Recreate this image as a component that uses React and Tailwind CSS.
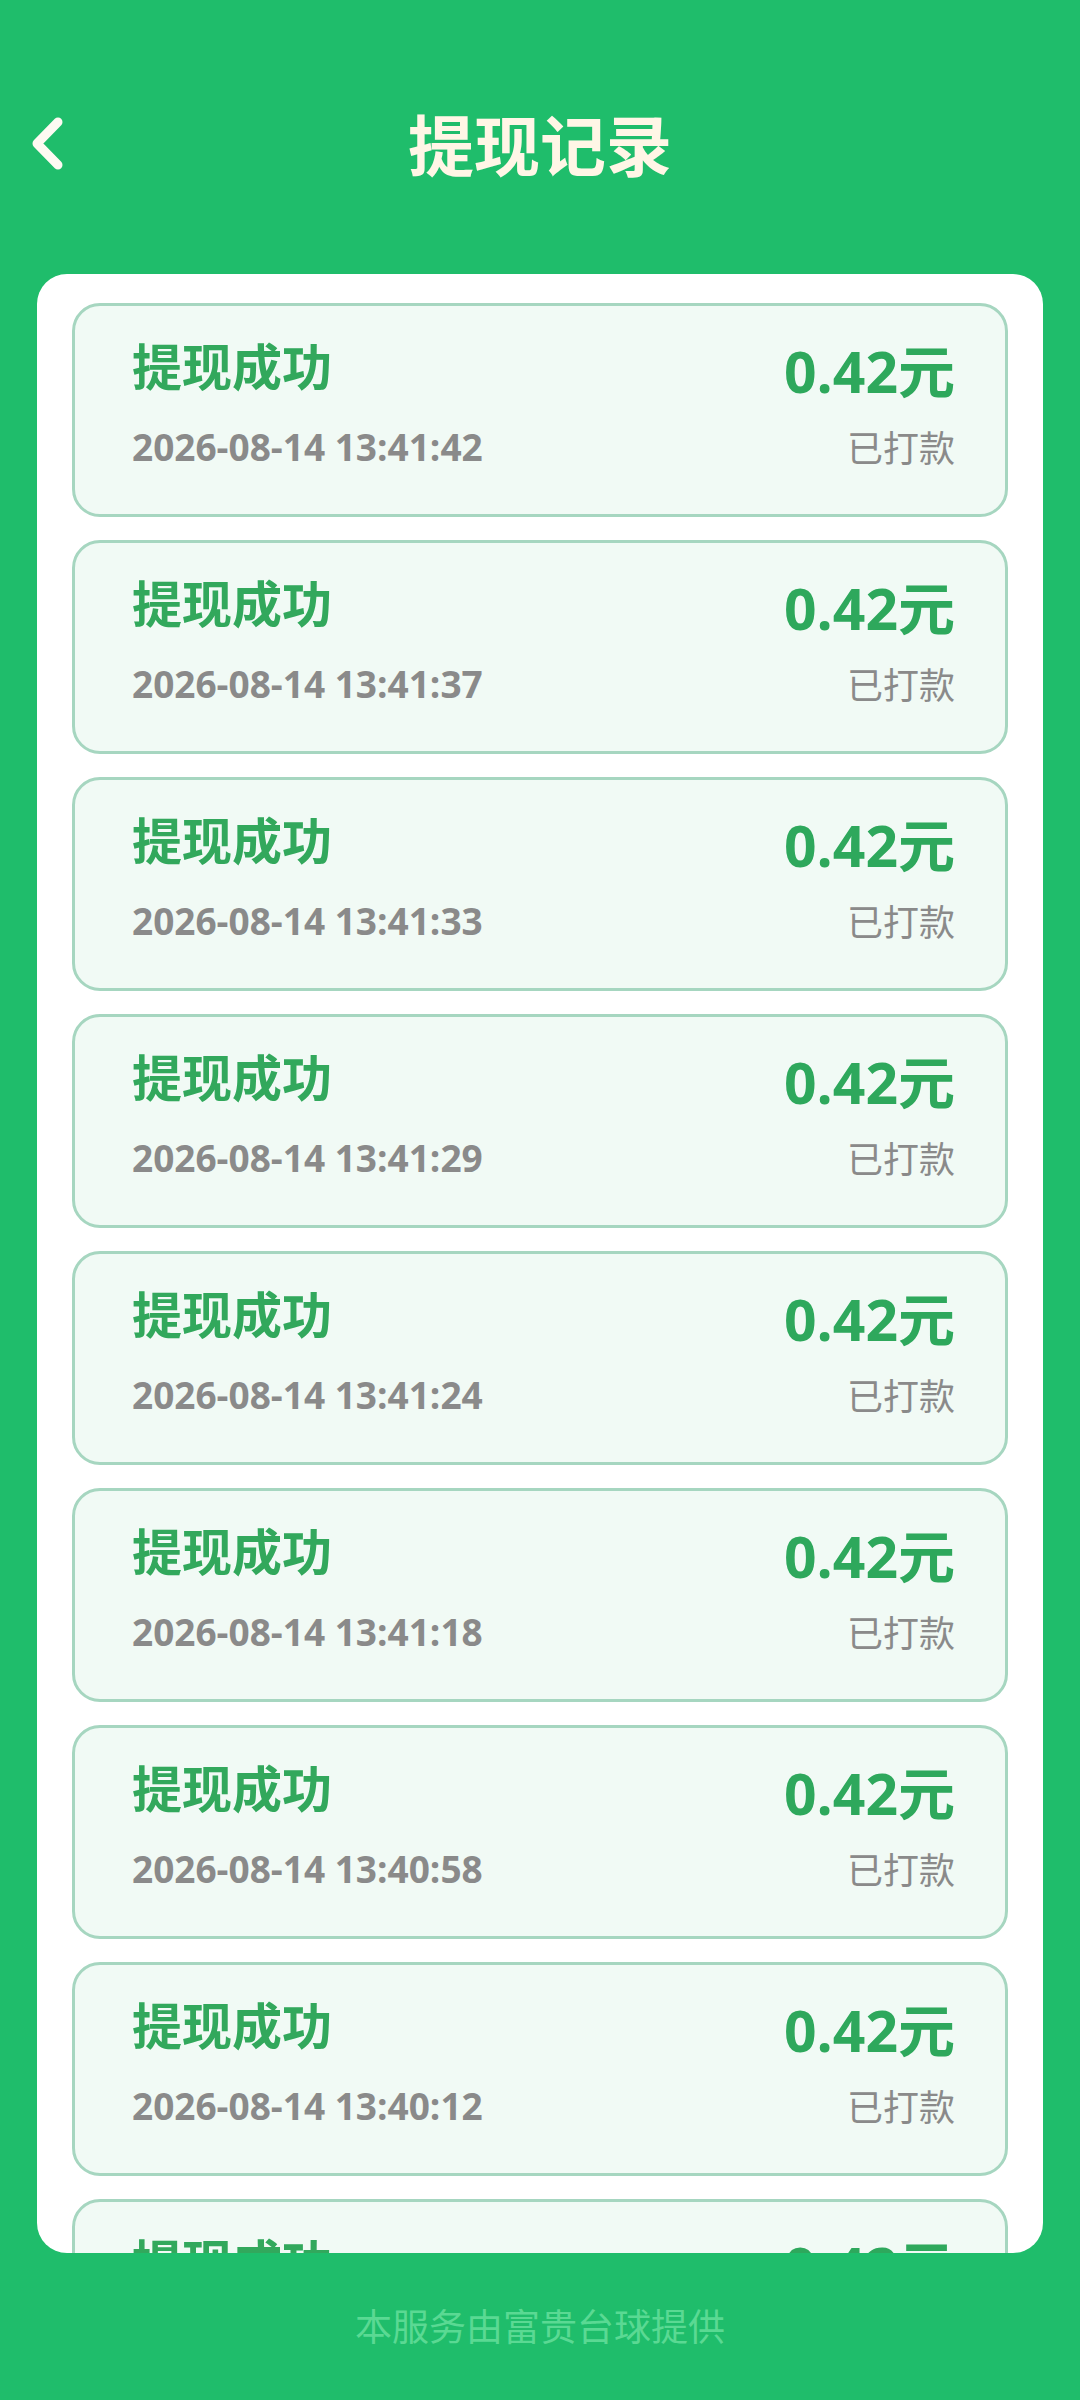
const records = [
  "2026-08-14 13:41:42",
  "2026-08-14 13:41:37",
  "2026-08-14 13:41:33",
  "2026-08-14 13:41:29",
  "2026-08-14 13:41:24",
  "2026-08-14 13:41:18",
  "2026-08-14 13:40:58",
  "2026-08-14 13:40:12",
  "2026-08-14 13:39:50",
];

const cjk = { fontFamily: '"Open Sans", "Noto Sans CJK SC", sans-serif' };

function BackIcon() {
  return (
    <svg width="70" height="70" viewBox="0 0 70 70" fill="none">
      <path d="M58 12 L37 33.5 L58 55" stroke="#fdfaf2" strokeWidth="9" strokeLinecap="round" strokeLinejoin="round" />
    </svg>
  );
}

function RecordCard({ time }) {
  return (
    <div className="flex h-[214px] shrink-0 justify-between rounded-[28px] border-[3px] border-[#a6d6c0] bg-[#f1faf5] pl-[57px] pr-[50px]">
      <div className="flex flex-col pt-[31px]">
        <div className="text-[50px] font-bold leading-[60px] text-[#32a85c]">提现成功</div>
        <div className="mt-[26px] text-[37px] font-bold leading-[48px] text-[#8a8a8a]">{time}</div>
      </div>
      <div className="flex flex-col items-end pt-[33px]">
        <div className="text-[57px] font-bold leading-[64px] text-[#2ea85c]">0.42元</div>
        <div className="mt-[24px] text-[36px] leading-[44px] text-[#8a8a8a]">已打款</div>
      </div>
    </div>
  );
}

export default function App() {
  return (
    <div className="flex h-[2400px] w-[1080px] flex-col bg-[#1fbd6b]" style={cjk}>
      <div className="grid h-[274px] shrink-0 grid-cols-[1fr_auto_1fr] items-start">
        <div className="mt-[110px]">
          <BackIcon />
        </div>
        <div className="mt-[105px] text-[66px] font-bold leading-[80px] text-[#fff6e6]">提现记录</div>
        <div />
      </div>
      <div className="mx-[37px] flex h-[1979px] shrink-0 flex-col gap-[23px] overflow-hidden rounded-[30px] bg-white px-[35px] pt-[29px]">
        {records.map((t) => (
          <RecordCard key={t} time={t} />
        ))}
      </div>
      <div className="flex flex-1 items-center justify-center">
        <span className="text-[37px] leading-[48px] text-[#5ad993]">本服务由富贵台球提供</span>
      </div>
    </div>
  );
}
